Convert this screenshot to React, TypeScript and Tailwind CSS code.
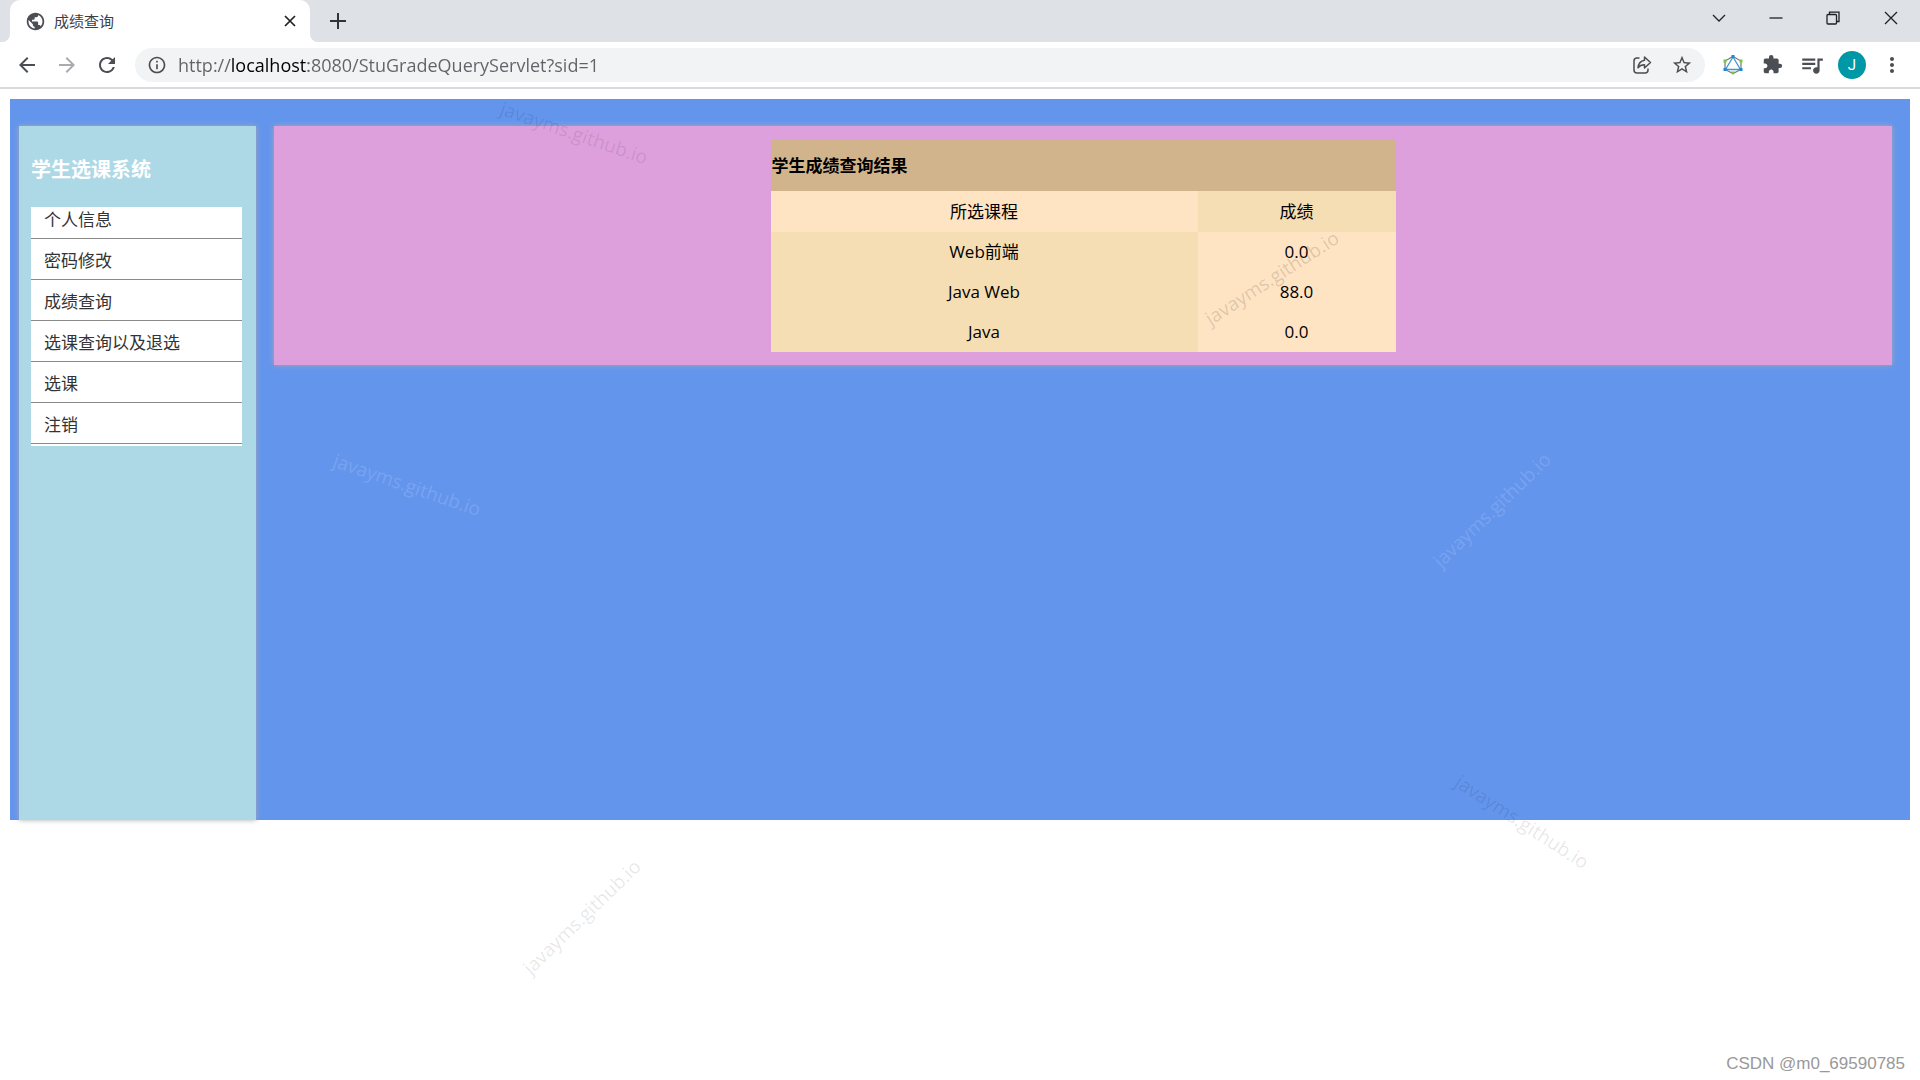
import React from "react";
import {
  MdArrowBack,
  MdArrowForward,
  MdExtension,
  MdInfoOutline,
  MdMoreVert,
  MdPublic,
  MdQueueMusic,
  MdRefresh,
  MdStarBorder,
} from "react-icons/md";

const menu = ["个人信息", "密码修改", "成绩查询", "选课查询以及退选", "选课", "注销"];

const grades = [
  { course: "Web前端", score: "0.0" },
  { course: "Java Web", score: "88.0" },
  { course: "Java", score: "0.0" },
];

const marks = [
  "left-[574px] top-[133px] rotate-[19deg] text-black/10",
  "left-[407px] top-[485px] rotate-[19deg] text-white/15",
  "left-[1492px] top-[510px] rotate-[-44deg] text-white/15",
  "left-[1272px] top-[278px] rotate-[-33deg] text-black/15",
  "left-[1522px] top-[822px] rotate-[33deg] text-black/10",
  "left-[582px] top-[917px] rotate-[-44deg] text-black/10",
];

function WindowIcon({ d }: { d: string }) {
  return (
    <svg viewBox="0 0 16 16" className="size-4" fill="none" stroke="#202124" strokeWidth="1.3">
      <path d={d} />
    </svg>
  );
}

function TabStrip() {
  return (
    <div className="flex h-[42px] items-stretch bg-[#dee1e6]">
      <div className="flex w-[10px] bg-white">
        <div className="flex-1 rounded-br-lg bg-[#dee1e6]" />
      </div>
      <div className="flex w-[300px] items-center rounded-t-[10px] bg-white pr-3 pl-[15px]">
        <MdPublic className="size-[21px] text-[#4b4e52]" />
        <span className="ml-2 flex-1 text-[15px] text-[#3c4043]">成绩查询</span>
        <button aria-label="关闭标签页" className="flex size-4 items-center justify-center">
          <svg viewBox="0 0 12 12" className="size-3" stroke="#202124" strokeWidth="1.7">
            <path d="M1 1l10 10M11 1L1 11" />
          </svg>
        </button>
      </div>
      <div className="flex w-[10px] bg-white">
        <div className="flex-1 rounded-bl-lg bg-[#dee1e6]" />
      </div>
      <button aria-label="新标签页" className="flex w-[35px] items-center justify-center">
        <svg viewBox="0 0 16 16" className="size-4" stroke="#303338" strokeWidth="2">
          <path d="M8 0v16M0 8h16" />
        </svg>
      </button>
      <div className="ml-auto flex items-center pr-[21px] pb-[6px]">
        <button aria-label="搜索标签页" className="mr-[41px]">
          <WindowIcon d="M2 5l6 6 6-6" />
        </button>
        <button aria-label="最小化" className="mr-[41px]">
          <WindowIcon d="M1.500 8h13" />
        </button>
        <button aria-label="还原" className="mr-[42px]">
          <WindowIcon d="M2 5.500a1 1 0 0 1 1-1h7.500a1 1 0 0 1 1 1V13a1 1 0 0 1-1 1H3a1 1 0 0 1-1-1zM4.500 4.500V2.200h9.500V11.500h-2.500" />
        </button>
        <button aria-label="关闭">
          <WindowIcon d="M2 2l12 12M14 2L2 14" />
        </button>
      </div>
    </div>
  );
}

function Toolbar() {
  return (
    <div className="flex h-[47px] items-center border-b-2 border-[#d8dadd] bg-white text-[#4b4e52]">
      <div className="flex items-center gap-4 pl-[15px]">
        <button aria-label="后退">
          <MdArrowBack className="size-6" />
        </button>
        <button aria-label="前进">
          <MdArrowForward className="size-6 text-[#a9abae]" />
        </button>
        <button aria-label="重新加载">
          <MdRefresh className="size-6" />
        </button>
      </div>
      <div className="ml-4 flex h-[34px] flex-1 items-center rounded-full bg-[#f1f3f4] pr-3 pl-3">
        <MdInfoOutline className="size-5" />
        <input
          aria-label="地址栏"
          defaultValue="http://localhost:8080/StuGradeQueryServlet?sid=1"
          className="ml-[11px] h-[34px] min-w-0 flex-1 bg-[linear-gradient(90deg,#5f6368_54px,#000_54px,#000_130px,#5f6368_130px)] bg-clip-text text-lg text-transparent caret-black outline-none"
        />
        <button aria-label="分享">
          <svg viewBox="0 0 20 20" className="size-5" fill="none" stroke="currentColor" strokeWidth="1.500">
            <path d="M7.500 3H5a3 3 0 0 0-3 3v9a3 3 0 0 0 3 3h8a3 3 0 0 0 3-3v-1.500" />
            <path d="M12.500 2l6 5.500-6 5.500V9.800c-3 0-5 .9-6.500 3 .4-4 2.700-7 6.500-7.600z" strokeLinejoin="round" />
          </svg>
        </button>
        <button aria-label="收藏" className="ml-[19px]">
          <MdStarBorder className="size-[22px]" />
        </button>
      </div>
      <div className="flex items-center pr-4 pl-[18px]">
        <button aria-label="扩展工具">
          <svg viewBox="0 0 20 20" className="size-5" fill="none">
            <path d="M10 1.500l8 4.500v8.500l-8 4-8-4V6z" stroke="#777" strokeWidth="1.200" />
            <path d="M10 2L2.500 14.500h15z" stroke="#3c96d8" strokeWidth="1.300" />
            <path d="M8.500 0h3v3h-3zM.5 13h3v3h-3zM16.500 13h3v3h-3z" fill="#1e88d2" />
            <path d="M.5 4.500h3v3h-3zM16.500 4.500h3v3h-3zM8 16.500h4l-2 3.500z" fill="#76c83a" />
          </svg>
        </button>
        <button aria-label="扩展程序" className="ml-[19px]">
          <MdExtension className="size-[21px]" />
        </button>
        <button aria-label="媒体控件" className="ml-4">
          <MdQueueMusic className="size-[26px]" />
        </button>
        <button
          aria-label="用户"
          className="ml-[13px] size-7 rounded-full bg-[#0097a7] font-['Roboto',sans-serif] text-[15px] leading-7 text-white"
        >
          J
        </button>
        <button aria-label="更多" className="ml-[14px]">
          <MdMoreVert className="size-6" />
        </button>
      </div>
    </div>
  );
}

function Sidebar() {
  return (
    <aside className="w-[237px] shrink-0 bg-[#add8e6] px-3 pt-[29px] shadow-[0_0_5px_#aaa]">
      <h1 className="text-xl leading-[30px] font-bold text-white">学生选课系统</h1>
      <nav className="mt-[22px] mr-[2px] bg-white pb-[2px]">
        {menu.map((label, i) => (
          <a
            key={label}
            href="#"
            className={
              i === 0
                ? "block h-8 border-b border-[#8a8a8a] pl-[13px] text-[17px] leading-[25px] text-[#333]"
                : "block h-[41px] border-b border-[#8a8a8a] pl-[13px] text-[17px] leading-[43px] text-[#333]"
            }
          >
            {label}
          </a>
        ))}
      </nav>
    </aside>
  );
}

function GradeTable() {
  return (
    <table className="mx-auto w-[625px] table-fixed border-collapse text-center text-[17px] leading-6 text-black">
      <colgroup>
        <col />
        <col className="w-[198px]" />
      </colgroup>
      <thead>
        <tr className="h-[52px] bg-[#d2b48c]">
          <th colSpan={2} className="pt-[2px] pl-px text-left font-bold">
            学生成绩查询结果
          </th>
        </tr>
        <tr className="h-[41px]">
          <th className="bg-[#ffe4c4] font-normal">所选课程</th>
          <th className="bg-[#f5deb3] font-normal">成绩</th>
        </tr>
      </thead>
      <tbody>
        {grades.map((g) => (
          <tr key={g.course} className="h-10">
            <td className="bg-[#f5deb3]">{g.course}</td>
            <td className="bg-[#ffe4c4]">{g.score}</td>
          </tr>
        ))}
      </tbody>
    </table>
  );
}

export default function App() {
  return (
    <div className="relative min-h-screen overflow-hidden bg-white font-['Open_Sans','Noto_Sans_CJK_SC',sans-serif]">
      <TabStrip />
      <Toolbar />
      <div className="mx-[10px] mt-[10px] flex min-h-[721px] bg-[#6495ed] pt-[27px] pr-[18px] pl-[9px]">
        <Sidebar />
        <main className="ml-[18px] flex-1 self-start bg-[#dda0dd] pt-[13px] pb-[13px] shadow-[0_0_5px_#aaa]">
          <GradeTable />
        </main>
      </div>
      {marks.map((m) => (
        <span
          key={m}
          className={`pointer-events-none absolute -translate-x-1/2 -translate-y-1/2 text-[19px] whitespace-nowrap ${m}`}
        >
          javayms.github.io
        </span>
      ))}
      <span className="absolute right-[15px] bottom-1 font-['Liberation_Sans',sans-serif] text-[17px] text-[#999]">
        CSDN @m0_69590785
      </span>
    </div>
  );
}
